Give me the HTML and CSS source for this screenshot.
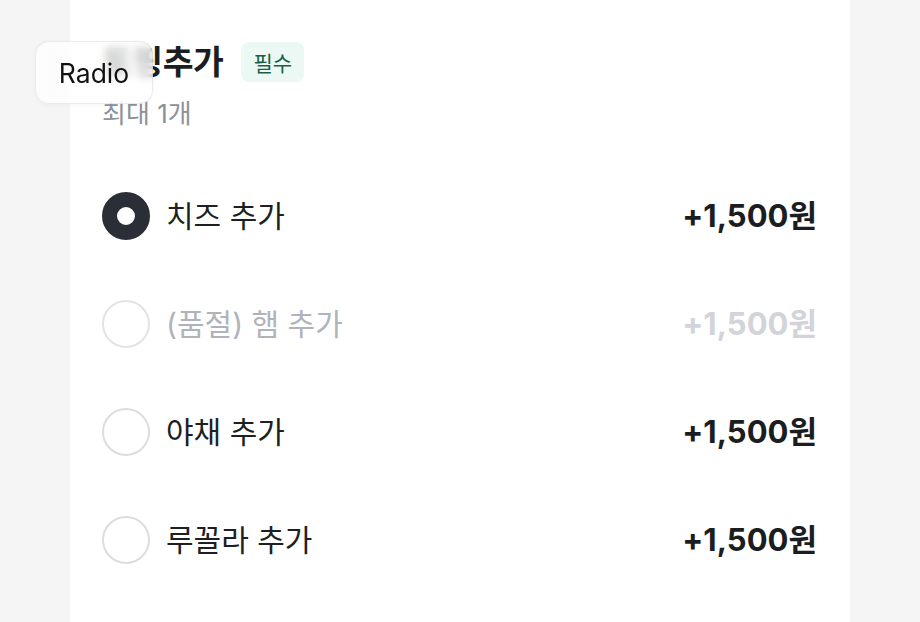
FILE: index.html
```html
<!DOCTYPE html>
<html lang="ko">
<head>
<meta charset="utf-8">
<title>Radio</title>
<link rel="stylesheet" href="styles.css">
</head>
<body>
<div class="page">
  <section class="panel">
    <div class="head">
      <h2 class="title">토핑추가</h2>
      <span class="badge">필수</span>
    </div>
    <p class="sub">최대 1개</p>
    <ul class="options">
      <li class="opt">
        <span class="radio checked"></span>
        <span class="label">치즈 추가</span>
        <span class="price">+1,500원</span>
      </li>
      <li class="opt disabled">
        <span class="radio"></span>
        <span class="label">(품절) 햄 추가</span>
        <span class="price">+1,500원</span>
      </li>
      <li class="opt">
        <span class="radio"></span>
        <span class="label">야채 추가</span>
        <span class="price">+1,500원</span>
      </li>
      <li class="opt">
        <span class="radio"></span>
        <span class="label">루꼴라 추가</span>
        <span class="price">+1,500원</span>
      </li>
    </ul>
  </section>
  <div class="tip">Radio</div>
</div>
</body>
</html>
```

FILE: styles.css
```css
html, body {
  margin: 0;
  padding: 0;
}
body {
  background: #f5f5f5;
  font-family: Inter, "Noto Sans CJK KR", sans-serif;
  color: #1d1f23;
}
.page {
  position: relative;
  width: 920px;
  height: 622px;
  overflow: hidden;
}
.panel {
  margin-left: 70px;
  width: 780px;
  height: 622px;
  background: #ffffff;
  box-sizing: border-box;
  padding: 42px 33px 0 32px;
}
.head {
  display: flex;
  align-items: center;
  gap: 18px;
  height: 40px;
}
.title {
  margin: 0;
  font-size: 33.5px;
  font-weight: 700;
  line-height: 40px;
  letter-spacing: -0.5px;
  color: #1b1d21;
}
.badge {
  display: inline-flex;
  align-items: center;
  justify-content: center;
  width: 63px;
  height: 40px;
  border-radius: 8px;
  background: #ebf8f3;
  color: #1d5f46;
  font-size: 21px;
  font-weight: 400;
}
.sub {
  margin: 16px 0 0;
  font-size: 26px;
  line-height: 32px;
  color: #8d9199;
}
.options {
  list-style: none;
  margin: 32px 0 0;
  padding: 0;
}
.opt {
  display: flex;
  align-items: center;
  height: 108px;
}
.radio {
  flex: none;
  width: 48px;
  height: 48px;
  box-sizing: border-box;
  border-radius: 50%;
  border: 2px solid #dcdde1;
  background: #fff;
  margin-right: 16px;
}
.radio.checked {
  border: 15px solid #2a2f37;
}
.label {
  flex: 1;
  font-size: 30px;
  line-height: 40px;
  color: #1d1f23;
}
.price {
  font-size: 31px;
  font-weight: 700;
  line-height: 40px;
  color: #1b1d21;
}
.disabled .radio {
  border-color: #e2e3e6;
}
.disabled .label {
  color: #b0b3ba;
}
.disabled .price {
  color: #d2d4d9;
}
.tip {
  position: absolute;
  left: 35px;
  top: 41px;
  width: 118px;
  height: 63px;
  box-sizing: border-box;
  display: flex;
  align-items: center;
  justify-content: center;
  border-radius: 14px;
  border: 1px solid rgba(0, 0, 0, 0.07);
  background: rgba(255, 255, 255, 0.72);
  backdrop-filter: blur(5px);
  -webkit-backdrop-filter: blur(5px);
  box-shadow: 0 1px 4px rgba(0, 0, 0, 0.04);
  font-size: 26.5px;
  color: #111;
}
```
